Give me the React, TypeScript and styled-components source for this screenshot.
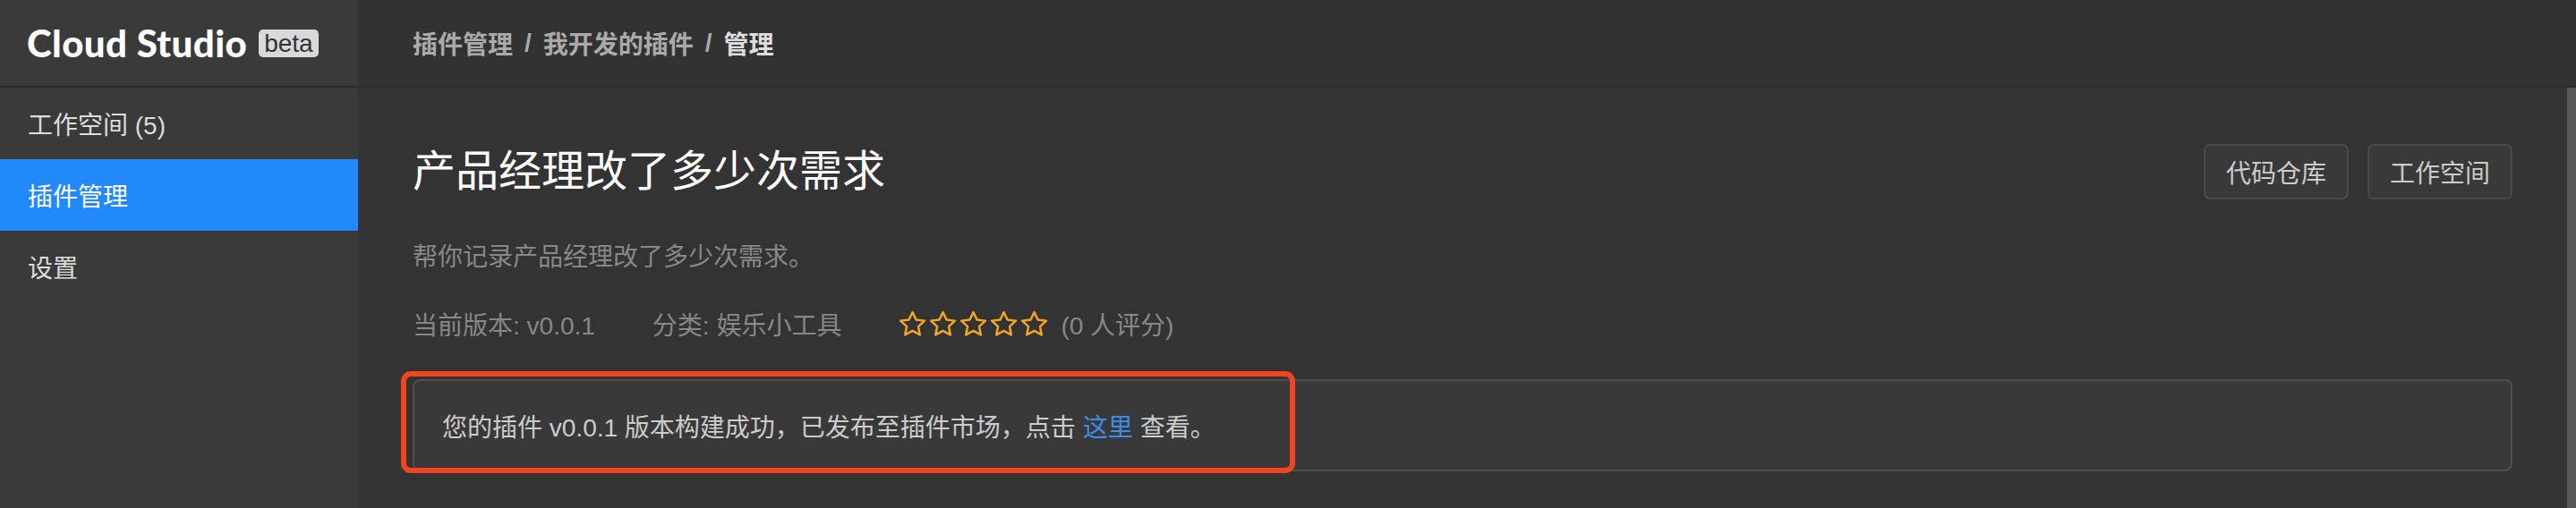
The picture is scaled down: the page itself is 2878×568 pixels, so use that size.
import React from "react";
import styled, { createGlobalStyle } from "styled-components";

const GlobalStyle = createGlobalStyle`
  html, body {
    margin: 0;
    padding: 0;
    background: #333333;
  }
  body {
    font-family: "Liberation Sans", "Noto Sans CJK SC", sans-serif;
    -webkit-font-smoothing: antialiased;
  }
  * { box-sizing: border-box; }
`;

const Shell = styled.div`
  display: flex;
  width: 100%;
  height: 100vh;
  overflow: hidden;
  background: #333333;
`;

const Sidebar = styled.aside`
  width: 400px;
  flex: none;
  display: flex;
  flex-direction: column;
  background: #3a3a3a;
`;

const Brand = styled.div`
  height: 98px;
  flex: none;
  display: flex;
  align-items: center;
  padding-left: 30px;
  border-bottom: 2px solid #2b2b2b;
`;

const BrandName = styled.span`
  font-family: "Lato", "Liberation Sans", sans-serif;
  font-weight: 900;
  font-size: 42px;
  color: #ffffff;
  letter-spacing: 0.4px;
`;

const Badge = styled.span`
  margin-left: 13px;
  height: 31px;
  padding: 0 6px;
  display: inline-flex;
  align-items: center;
  border-radius: 5px;
  background: #d9d9d9;
  color: #333333;
  font-family: "Liberation Sans", sans-serif;
  font-size: 28px;
  line-height: 31px;
`;

const NavItem = styled.div<{ $active?: boolean }>`
  height: 80px;
  display: flex;
  align-items: center;
  padding-left: 31px;
  font-size: 28px;
  color: ${(p) => (p.$active ? "#ffffff" : "#dddddd")};
  background: ${(p) => (p.$active ? "#2189f9" : "transparent")};
`;

const Main = styled.main`
  flex: 1;
  min-width: 0;
  display: flex;
  flex-direction: column;
`;

const TopBar = styled.header`
  height: 98px;
  flex: none;
  display: flex;
  align-items: center;
  padding-left: 61px;
  border-bottom: 2px solid #2b2b2b;
  background: #323232;
  font-size: 28px;
  font-weight: 700;
  color: #aaaaaa;
`;

const Crumb = styled.span<{ $current?: boolean }>`
  color: ${(p) => (p.$current ? "#dedede" : "#aaaaaa")};
`;

const Sep = styled.span`
  margin: 0 13px;
  color: #aaaaaa;
`;

const Body = styled.div`
  flex: 1;
  display: flex;
  min-height: 0;
`;

const Content = styled.section`
  flex: 1;
  min-width: 0;
  padding: 63px 61px 0 61px;
`;

const ScrollTrack = styled.div`
  width: 10px;
  flex: none;
  background: #575757;
`;

const TitleRow = styled.div`
  display: flex;
  align-items: center;
  justify-content: space-between;
  height: 62px;
`;

const Title = styled.h1`
  margin: 0;
  font-size: 48px;
  font-weight: 400;
  color: #ffffff;
  line-height: 62px;
`;

const Actions = styled.div`
  display: flex;
  gap: 21px;
`;

const Button = styled.button`
  height: 62px;
  padding: 0 23px;
  border: 2px solid #4b4b4b;
  border-radius: 7px;
  background: #393939;
  color: #cccccc;
  font-family: inherit;
  font-size: 28px;
  cursor: pointer;
`;

const Description = styled.p`
  margin: 45px 0 0;
  font-size: 28px;
  line-height: 40px;
  color: #888888;
`;

const Meta = styled.div`
  margin-top: 34px;
  display: flex;
  align-items: center;
  height: 40px;
  font-size: 28px;
  color: #888888;
`;

const MetaItem = styled.span`
  margin-right: 64px;
`;

const Stars = styled.span`
  display: inline-flex;
  gap: 3px;
  margin-right: 14px;
`;

const Notice = styled.div`
  position: relative;
  margin-top: 42px;
  height: 103px;
  display: flex;
  align-items: center;
  padding-left: 31px;
  border: 2px solid #4f4f4f;
  border-radius: 8px;
  background: #393939;
  font-size: 28px;
  color: #cccccc;
`;

const Link = styled.a`
  color: #3b8eea;
  text-decoration: none;
  margin: 0 8px;
`;

const Highlight = styled.div`
  position: absolute;
  left: -15px;
  top: -11px;
  width: 999px;
  height: 114px;
  border: 6px solid #f3441f;
  border-radius: 11px;
  pointer-events: none;
`;

const Star = () => (
  <svg width="31" height="30" viewBox="0 0 24 23" fill="none">
    <path
      d="M12 1.4l3.1 6.6 7.3.9-5.4 5 1.45 7.2L12 17.55 5.55 21.1 7 13.9l-5.4-5 7.3-.9z"
      stroke="#f5a623"
      strokeWidth="1.9"
      strokeLinejoin="round"
    />
  </svg>
);

export default function App() {
  return (
    <>
      <GlobalStyle />
      <Shell>
        <Sidebar>
          <Brand>
            <BrandName>Cloud Studio</BrandName>
            <Badge>beta</Badge>
          </Brand>
          <NavItem>工作空间 (5)</NavItem>
          <NavItem $active>插件管理</NavItem>
          <NavItem>设置</NavItem>
        </Sidebar>
        <Main>
          <TopBar>
            <Crumb>插件管理</Crumb>
            <Sep>/</Sep>
            <Crumb>我开发的插件</Crumb>
            <Sep>/</Sep>
            <Crumb $current>管理</Crumb>
          </TopBar>
          <Body>
            <Content>
              <TitleRow>
                <Title>产品经理改了多少次需求</Title>
                <Actions>
                  <Button>代码仓库</Button>
                  <Button>工作空间</Button>
                </Actions>
              </TitleRow>
              <Description>帮你记录产品经理改了多少次需求。</Description>
              <Meta>
                <MetaItem>当前版本: v0.0.1</MetaItem>
                <MetaItem>分类: 娱乐小工具</MetaItem>
                <Stars>
                  <Star />
                  <Star />
                  <Star />
                  <Star />
                  <Star />
                </Stars>
                <span>(0 人评分)</span>
              </Meta>
              <Notice>
                <span>您的插件 v0.0.1 版本构建成功，已发布至插件市场，点击</span>
                <Link href="#">这里</Link>
                <span>查看。</span>
                <Highlight />
              </Notice>
            </Content>
            <ScrollTrack />
          </Body>
        </Main>
      </Shell>
    </>
  );
}
